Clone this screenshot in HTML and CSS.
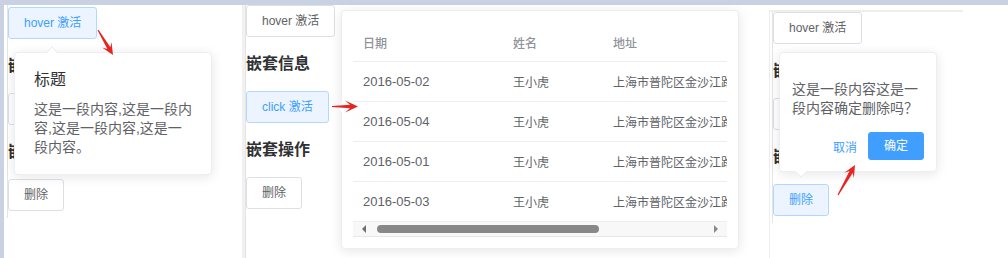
FILE: index.html
```html
<!DOCTYPE html>
<html lang="zh-CN">
<head>
  <meta charset="UTF-8">
  <meta name="viewport" content="width=device-width, initial-scale=1.0">
  <title>Popover 嵌套</title>
  <link rel="stylesheet" href="styles.css">
</head>
<body>
  <div class="topbar"></div>
  <div class="stage">
    <div class="gutter"></div>

    <!-- hover 激活 -->
    <div class="shot shot1">
      <div class="demo">
        <button class="btn active">hover 激活</button>
        <h3>嵌套信息</h3>
        <button class="btn">click 激活</button>
        <h3>嵌套操作</h3>
        <button class="btn">删除</button>
        <div class="popover pop-info">
          <div class="arrow arrow-top"></div>
          <div class="pop-title">标题</div>
          <div class="pop-text">这是一段内容,这是一段内容,这是一段内容,这是一段内容。</div>
        </div>
      </div>
    </div>

    <div class="sep"></div>

    <!-- click 激活 -->
    <div class="shot shot2">
      <div class="demo">
        <button class="btn">hover 激活</button>
        <h3>嵌套信息</h3>
        <button class="btn active">click 激活</button>
        <h3>嵌套操作</h3>
        <button class="btn">删除</button>
        <div class="popover pop-table">
          <div class="arrow arrow-left"></div>
          <div class="table">
            <div class="tr th">
              <div class="td c-date">日期</div>
              <div class="td c-name">姓名</div>
              <div class="td c-addr">地址</div>
            </div>
            <div class="tr">
              <div class="td c-date">2016-05-02</div>
              <div class="td c-name">王小虎</div>
              <div class="td c-addr">上海市普陀区金沙江路 1518 弄</div>
            </div>
            <div class="tr">
              <div class="td c-date">2016-05-04</div>
              <div class="td c-name">王小虎</div>
              <div class="td c-addr">上海市普陀区金沙江路 1518 弄</div>
            </div>
            <div class="tr">
              <div class="td c-date">2016-05-01</div>
              <div class="td c-name">王小虎</div>
              <div class="td c-addr">上海市普陀区金沙江路 1518 弄</div>
            </div>
            <div class="tr">
              <div class="td c-date">2016-05-03</div>
              <div class="td c-name">王小虎</div>
              <div class="td c-addr">上海市普陀区金沙江路 1518 弄</div>
            </div>
            <div class="scrollbar">
              <span class="sb-left"></span>
              <span class="sb-thumb"></span>
              <span class="sb-right"></span>
            </div>
          </div>
        </div>
      </div>
    </div>

    <!-- 嵌套操作 -->
    <div class="shot shot3">
      <div class="demo">
        <button class="btn">hover 激活</button>
        <h3>嵌套信息</h3>
        <button class="btn">click 激活</button>
        <h3>嵌套操作</h3>
        <button class="btn active">删除</button>
        <div class="popover pop-confirm">
          <p>这是一段内容这是一段内容确定删除吗？</p>
          <div class="pop-actions">
            <button class="btn-text">取消</button>
            <button class="btn-mini">确定</button>
          </div>
          <div class="arrow arrow-bottom"></div>
        </div>
      </div>
    </div>
  </div>

  <!-- 标注箭头 -->
  <svg class="marks" width="1008" height="258" viewBox="0 0 1008 258">
    <polygon points="97.5,30.3 107.3,49.1 102.1,47.5 113,55 111.5,41.9 110.4,47.2 98.5,29.7"/>
    <polygon points="332,107.1 350,108.3 345,112.5 358,106.5 345,100.5 350,104.7 332,105.9"/>
    <polygon points="838.5,195.3 852.7,172.9 853.9,178.1 855,165 844.3,172.7 849.5,171.1 837.5,194.7"/>
  </svg>
</body>
</html>
```

FILE: styles.css
```css
body{
  margin: 0;
  width: 1008px;
  height: 258px;
  overflow: hidden;
  position: relative;
  background: #fff;
  font-family: "Liberation Sans", "Noto Sans CJK SC", sans-serif;
  font-size: 14px;
  color: #606266;
}
.topbar{
  height: 5px;
  background: #c9d2e2;
}
.stage{
  display: flex;
  height: 253px;
}
.gutter{
  width: 4px;
  background: #c9d2e2;
}
.sep{
  width: 3px;
  background: #f1f1f1;
}
.shot{
  box-sizing: border-box;
  flex: none;
}
.shot1{
  width: 238px;
  padding-left: 3px;
}
.shot2{
  width: 524px;
  border-left: 1px solid #e4e4e4;
}
.shot3{
  width: 194px;
  margin-top: 5px;
  border-top: 2px solid #eeeeee;
  border-left: 1px solid #eeeeee;
  padding-left: 2px;
}

/* 每个演示块 */
.demo{
  position: relative;
  display: flex;
  flex-direction: column;
  align-items: flex-start;
  box-sizing: border-box;
  border-left: 1px solid #e4e4e4;
}
.shot1 .demo{
  height: 213px;
  padding-top: 2px;
}
.shot2 .demo{
  height: 100%;
  border-left: none;
}
.shot3 .demo{
  height: 211px;
}
.demo h3{
  margin: 16px 0;
  font-size: 16px;
  line-height: 22px;
  font-weight: bold;
  color: #303133;
}

/* 按钮 */
.btn{
  display: block;
  height: 32px;
  padding: 9px 15px;
  box-sizing: border-box;
  font-family: inherit;
  font-size: 12px;
  line-height: 12px;
  color: #606266;
  background: #fff;
  border: 1px solid #dcdfe6;
  border-radius: 3px;
}
.btn.active{
  color: #409eff;
  background: #ecf5ff;
  border-color: #b3d8ff;
}
.btn-text{
  padding: 0;
  border: none;
  background: none;
  font-family: inherit;
  font-size: 12px;
  color: #409eff;
}
.btn-mini{
  height: 28px;
  padding: 7px 15px;
  box-sizing: border-box;
  font-family: inherit;
  font-size: 12px;
  line-height: 12px;
  color: #fff;
  background: #409eff;
  border: 1px solid #409eff;
  border-radius: 3px;
}

/* 弹出框 */
.popover{
  position: absolute;
  box-sizing: border-box;
  background: #fff;
  border: 1px solid #ebeef5;
  border-radius: 4px;
  box-shadow: 0 2px 12px 0 rgba(0, 0, 0, .1);
  z-index: 2;
}
.arrow{
  position: absolute;
  width: 7px;
  height: 7px;
  background: #fff;
  border: 1px solid #ebeef5;
  transform: rotate(45deg);
}
.arrow-top{
  top: -5px;
  left: 33px;
  border-right: none;
  border-bottom: none;
}
.arrow-left{
  left: -5px;
  top: 92px;
  border-top: none;
  border-right: none;
}
.arrow-bottom{
  bottom: -5px;
  left: 17px;
  border-top: none;
  border-left: none;
}

.pop-info{
  left: 6px;
  top: 47px;
  width: 198px;
  height: 123px;
  padding: 19px 19px 0;
}
.pop-title{
  font-size: 16px;
  line-height: 16px;
  color: #303133;
  margin-bottom: 12px;
}
.pop-text{
  font-size: 14px;
  line-height: 19px;
  color: #606266;
}

.pop-table{
  left: 95px;
  top: 5px;
  width: 398px;
  height: 239px;
  padding: 11px;
}
.table{
  width: 374px;
  overflow: hidden;
  font-size: 12px;
}
.tr{
  display: flex;
  align-items: center;
  height: 40px;
  box-sizing: border-box;
  border-bottom: 1px solid #ebeef5;
  color: #606266;
}
.tr.th{
  color: #909399;
  font-weight: 500;
  padding-top: 1px;
}
.td{
  flex: none;
  box-sizing: border-box;
  padding: 0 10px;
  white-space: nowrap;
  overflow: hidden;
}
.c-date{
  width: 150px;
  font-size: 13px;
}
.tr.th .c-date{
  font-size: 12px;
}
.c-name{
  width: 100px;
}
.c-addr{
  width: 300px;
}
.scrollbar{
  display: flex;
  align-items: center;
  height: 15px;
  box-sizing: border-box;
  padding: 0 9px;
  background: #f8f8f8;
  border-bottom: 1px solid #e8e8e8;
}
.sb-left{
  width: 0;
  height: 0;
  border-top: 4px solid transparent;
  border-bottom: 4px solid transparent;
  border-right: 4px solid #6e6e6e;
}
.sb-thumb{
  margin-left: 11px;
  width: 222px;
  height: 8px;
  border-radius: 4px;
  background: #888;
}
.sb-right{
  margin-left: auto;
  width: 0;
  height: 0;
  border-top: 4px solid transparent;
  border-bottom: 4px solid transparent;
  border-left: 4px solid #8a8a8a;
}

.pop-confirm{
  left: 6px;
  top: 40px;
  width: 158px;
  height: 120px;
  padding: 0 12px;
}
.pop-confirm p{
  margin: 0 0 14px;
  padding-top: 27px;
  font-size: 14px;
  line-height: 19px;
}
.pop-actions{
  display: flex;
  justify-content: flex-end;
  align-items: center;
  gap: 11px;
}

.marks{
  position: absolute;
  left: 0;
  top: 0;
  pointer-events: none;
  z-index: 10;
}
.marks polygon{
  fill: #e52620;
}
```
